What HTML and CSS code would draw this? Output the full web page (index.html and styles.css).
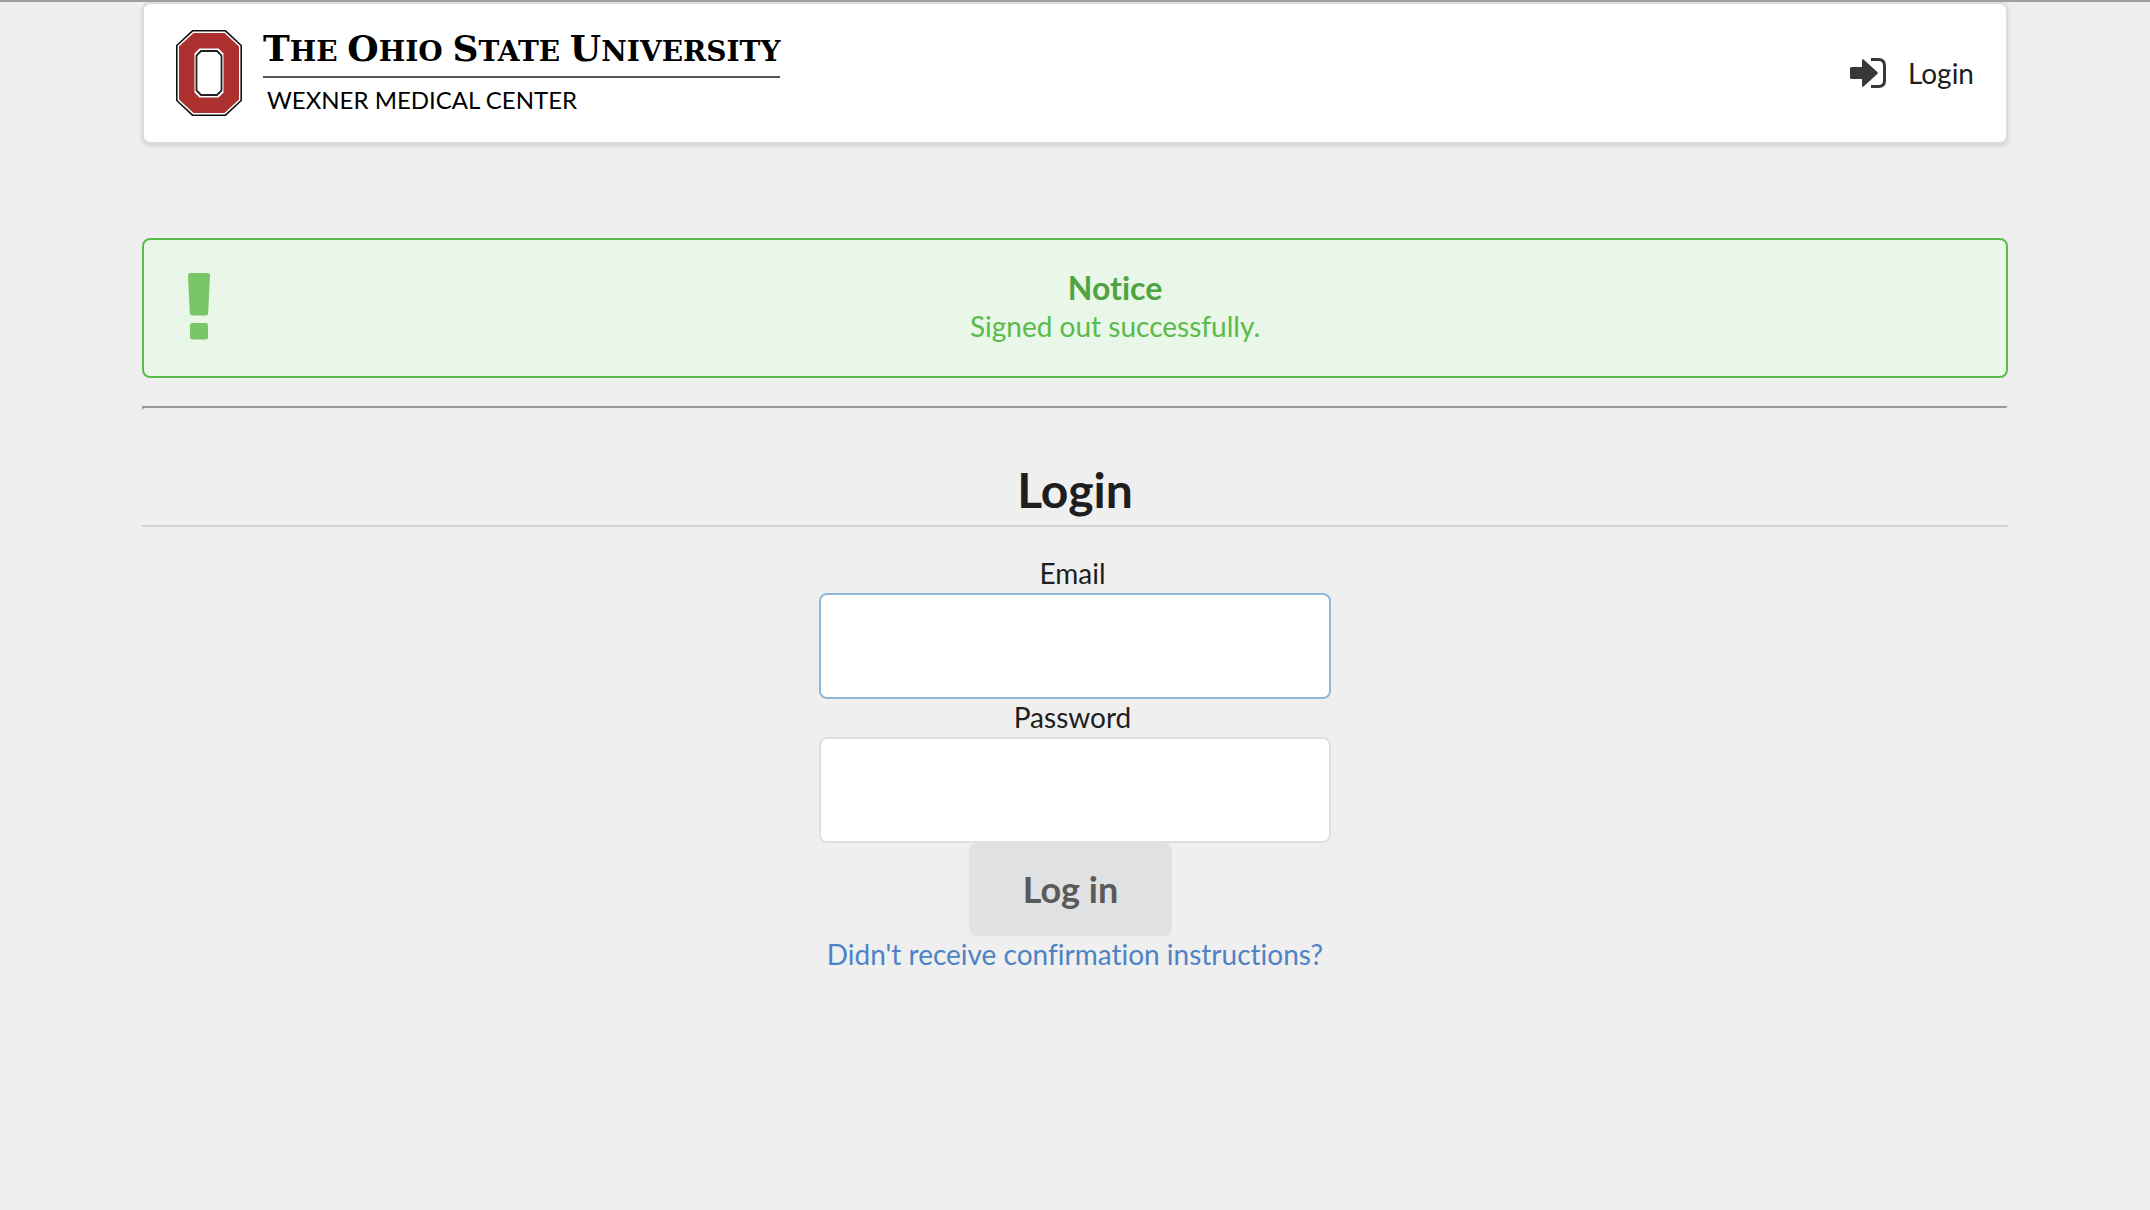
FILE: index.html
```html
<!DOCTYPE html>
<html lang="en">
<head>
<meta charset="utf-8">
<meta name="viewport" content="width=device-width, initial-scale=1">
<title>Login</title>
<link rel="stylesheet" href="styles.css">
</head>
<body>
<div class="container">
  <header class="topbar">
    <a class="brand" href="#">
      <svg class="brand-mark" viewBox="0 0 66 86" aria-hidden="true">
        <path d="M16.500 .8h33L65.200 15.500v55L49.500 85.200h-33L.8 70.500v-55z" fill="#fff" stroke="#111" stroke-width="1.600"/>
        <path d="M17.500 3h31L63 16.500v53L48.500 83h-31L3 69.500v-53z" fill="#ac312e"/>
        <path d="M23.500 18.500h19l5 5v39l-5 5h-19l-5-5v-39z" fill="#fff"/>
        <path d="M25 21h16l4.500 4.500v35L41 65H25l-4.500-4.500v-35z" fill="#fff" stroke="#222" stroke-width="1.800"/>
      </svg>
      <span class="brand-text">
        <span class="brand-name"><b>T</b>HE <b>O</b>HIO <b>S</b>TATE <b>U</b>NIVERSITY</span>
        <span class="brand-unit">WEXNER MEDICAL CENTER</span>
      </span>
    </a>
    <nav>
      <a class="nav-link" href="#">
        <svg class="nav-icon" viewBox="0 0 36 30" aria-hidden="true">
          <path d="M1.500 9H12V2.500Q12 .5 13.600 1.500L27.300 14q1 1 0 2L13.600 28.500Q12 29.500 12 27.500V21H1.500Q0 21 0 19.500v-9Q0 9 1.500 9z" fill="#383838"/>
          <path d="M21 1.500h7.500q6 0 6 6v15q0 6-6 6H21" fill="none" stroke="#383838" stroke-width="3" stroke-linecap="butt"/>
        </svg>
        Login
      </a>
    </nav>
  </header>

  <section class="notice" role="status">
    <svg class="notice-icon" viewBox="0 0 22 67" aria-hidden="true">
      <path d="M2.500 0h17Q22 0 22 2.500L20.200 40q-.2 2.500-2.500 2.500H4.300q-2.300 0-2.500-2.500L0 2.500Q0 0 2.500 0zM4.500 50h13q2.500 0 2.500 2.500v11.500q0 2.500-2.500 2.500h-13Q2 66.500 2 64V52.500Q2 50 4.500 50z" fill="#78c668"/>
    </svg>
    <div class="notice-body">
      <h2 class="notice-title">Notice</h2>
      <p class="notice-message">Signed out successfully.</p>
    </div>
  </section>

  <hr class="rule">

  <main>
    <h1 class="title">Login</h1>
    <form class="login-form">
      <label class="label" for="email">Email</label>
      <input class="field field-active" id="email" type="email" name="email">
      <label class="label" for="password">Password</label>
      <input class="field" id="password" type="password" name="password">
      <button class="submit" type="submit">Log in</button>
      <a class="help-link" href="#">Didn't receive confirmation instructions?</a>
    </form>
  </main>
</div>
</body>
</html>
```
FILE: styles.css
```css
* {
  box-sizing: border-box;
}

body {
  margin: 0;
  border-top: 2px solid #9f9f9f;
  background: #efefef;
  color: #1e1e1e;
  font: 28px/36px Lato, "Liberation Sans", sans-serif;
  font-variant-ligatures: none;
}

a {
  text-decoration: none;
}

.container {
  margin: 0 142px;
}

.topbar {
  display: flex;
  align-items: center;
  justify-content: space-between;
  padding: 26px 32px;
  border: 2px solid #dcdcdc;
  border-radius: 8px;
  background: #fff;
  box-shadow: 0 2px 4px rgba(34, 36, 38, 0.15);
}

.brand {
  display: flex;
  gap: 21px;
  color: #000;
}

.brand-mark {
  width: 66px;
  height: 86px;
}

.brand-text {
  display: flex;
  flex-direction: column;
}

.brand-name {
  padding-bottom: 6px;
  border-bottom: 2px solid #555;
  font: bold 28px/36px "DejaVu Serif", serif;
  white-space: nowrap;
}

.brand-name b {
  font-size: 36px;
}

.brand-unit {
  padding: 7px 4px 0;
  font-size: 24px;
  line-height: 30px;
}

.nav-link {
  display: flex;
  align-items: center;
  gap: 22px;
  color: #1e1e1e;
}

.nav-icon {
  width: 36px;
  height: 30px;
}

.notice {
  display: flex;
  align-items: center;
  margin-top: 94px;
  padding: 28px 46px 32px 44px;
  border: 2px solid #5aba4a;
  border-radius: 8px;
  background: #e8f7e8;
  color: #5aba4a;
}

.notice-icon {
  width: 22px;
  height: 67px;
}

.notice-body {
  flex: 1;
  padding-left: 60px;
  text-align: center;
}

.notice-title {
  margin: 0;
  color: #4fa441;
  font-size: 32px;
  line-height: 40px;
}

.notice-message {
  margin: 0;
}

.rule {
  margin: 28px 0 0;
  border: 2px solid;
  border-color: #9a9a9a #efefef #efefef #9a9a9a;
}

.title {
  margin: 50px 0 28px;
  padding-bottom: 5px;
  border-bottom: 2px solid #d2d3d3;
  font-size: 48px;
  line-height: 60px;
  text-align: center;
}

.login-form {
  display: flex;
  flex-direction: column;
  align-items: center;
}

.label {
  padding: 0 5px 2px 0;
}

.field {
  width: 512px;
  max-width: 100%;
  height: 106px;
  padding: 16px 28px;
  border: 2px solid #dedfdf;
  border-radius: 8px;
  outline: 0;
  background: #fff;
  font: inherit;
}

.field-active {
  border-color: #8fb7dc;
}

.submit {
  margin-right: 9px;
  padding: 28px 54px;
  border: 0;
  border-radius: 8px;
  background: #e0e1e2;
  color: #5a5a5a;
  font: bold 36px/37px Lato, "Liberation Sans", sans-serif;
}

.help-link {
  color: #4d83c4;
}
```
